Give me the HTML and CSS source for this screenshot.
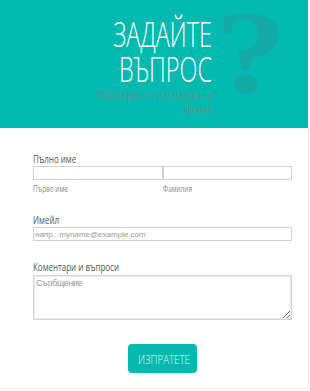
FILE: index.html
```html
<!DOCTYPE html>
<html lang="bg">
<head>
  <meta charset="UTF-8">
  <meta name="viewport" content="width=device-width, initial-scale=1.0">
  <title>Задайте въпрос</title>
  <link rel="stylesheet" href="styles.css">
</head>
<body>

  <div class="card">
    <!-- Header -->
    <div class="header">
      <div class="header-text">
        <h1>ЗАДАЙТЕ<br>ВЪПРОС</h1>
        <p>Моля свържете се с нас за конкретни<br>причини</p>
      </div>
      <div class="qmark">?</div>
    </div>

    <!-- Form -->
    <form class="form">
      <div class="field">
        <label class="label"><span class="narrow">Пълно име</span></label>
        <div class="name-row">
          <div class="name-col">
            <input type="text" class="input">
            <span class="sublabel"><span class="narrow">Първо име</span></span>
          </div>
          <div class="name-col">
            <input type="text" class="input">
            <span class="sublabel"><span class="narrow">Фамилия</span></span>
          </div>
        </div>
      </div>

      <div class="field">
        <label class="label"><span class="narrow">Имейл</span></label>
        <input type="email" class="input" placeholder="напр.: myname@example.com">
      </div>

      <div class="field last">
        <label class="label"><span class="narrow">Коментари и въпроси</span></label>
        <textarea class="textarea" placeholder="Съобщение"></textarea>
      </div>

      <div class="actions">
        <button type="button" class="submit"><span class="btn-text">ИЗПРАТЕТЕ</span></button>
      </div>
    </form>
  </div>

</body>
</html>
```

FILE: styles.css
```css
body {
  margin: 0;
  padding: 0;
  background-color: #ffffff;
  font-family: "Open Sans", "Liberation Sans", Arial, sans-serif;
}
.card {
  width: 308px;
  height: 388px;
  background-color: #fff;
  border-right: 1px solid #ececec;
  border-bottom: 1px solid #ececec;
  overflow: hidden;
}
.header {
  background-color: #03b9b0;
  height: 128px;
  display: flex;
  align-items: flex-start;
}
/* the reference uses a condensed face, so squeeze the text */
.header-text {
  width: 180px;
  margin-left: 32px;
  padding-top: 16px;
  text-align: right;
  white-space: nowrap;
  transform: scaleX(0.67);
  transform-origin: right top;
}
.header h1 {
  margin: 0;
  color: #fff;
  font-weight: 300;
  font-size: 35px;
  line-height: 35px;
}
.header p {
  margin: 2px 0 0;
  color: #6f8e8b;
  font-size: 10px;
  line-height: 14px;
  transform: scaleX(0.95);
  transform-origin: right top;
}
.qmark {
  margin-left: 3px;
  margin-top: -6px;
  font-family: "Liberation Serif", "Times New Roman", serif;
  font-weight: bold;
  font-size: 118px;
  line-height: 118px;
  color: #14aaa6;
  transform: scaleX(1.22);
  transform-origin: left top;
}
.form {
  padding: 25px 16px 0 33px;
}
.narrow {
  display: inline-block;
  transform: scaleX(0.76);
  transform-origin: left center;
  white-space: nowrap;
}
.field {
  margin-bottom: 20px;
}
.field.last {
  margin-bottom: 0;
}
.label {
  display: block;
  color: #555;
  font-size: 10.5px;
  line-height: 12px;
  margin-bottom: 1px;
}
.name-row {
  display: flex;
}
.name-col {
  flex: 1;
}
.input {
  display: block;
  width: 100%;
  height: 14px;
  box-sizing: border-box;
  border: 1px solid #d2d2d2;
  padding: 0 1px;
  margin: 0;
  font-family: "Liberation Sans", Arial, sans-serif;
  font-size: 8px;
  color: #555;
  outline: none;
}
.input::placeholder {
  color: #9a9a9a;
}
.sublabel {
  display: block;
  color: #8a8a8a;
  font-size: 8.5px;
  line-height: 10px;
  margin-top: 4px;
}
.textarea {
  display: block;
  width: 100%;
  height: 45px;
  box-sizing: border-box;
  margin: 2px 0 0;
  border: 1px solid #d6d6d6;
  box-shadow: inset 0 0 0 1px #ebebeb;
  padding: 2px 2px;
  font-family: "Liberation Sans", Arial, sans-serif;
  font-size: 9px;
  letter-spacing: -0.4px;
  resize: vertical;
}
.textarea::placeholder {
  color: #9a9a9a;
}
.actions {
  text-align: center;
  padding-top: 24px;
  padding-right: 1px;
}
.submit {
  width: 69px;
  height: 29px;
  background-color: #06b8af;
  color: #e3f6f5;
  border: none;
  border-radius: 4px;
  font-family: "Open Sans", sans-serif;
  font-weight: 300;
  font-size: 13.5px;
  padding: 0;
  cursor: pointer;
}
.btn-text {
  display: inline-block;
  transform: scaleX(0.72);
  white-space: nowrap;
}
```
